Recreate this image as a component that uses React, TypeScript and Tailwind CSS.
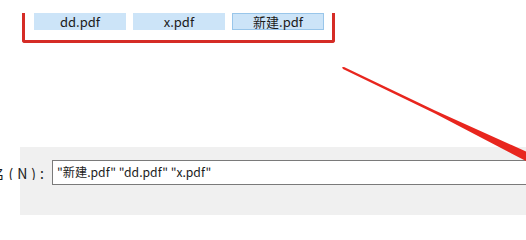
import React from "react";

const font = { fontFamily: '"Noto Sans CJK SC", "Noto Sans", sans-serif' };

export default function App() {
  return (
    <div
      className="relative w-[526px] h-[215px] overflow-hidden bg-white text-[#1b1b1b]"
      style={font}
    >
      <div className="pt-[13px] pl-[22px]">
        <div className="w-[313px] h-[30px] border-x-[3px] border-b-[3px] border-[#d52c26] rounded-b-[3px] pl-[9px]">
          <div className="flex gap-[7px]">
            <div className="w-[92px] h-[17px] bg-[#cce4f8] flex items-center justify-center text-[13px] leading-none">
              dd.pdf
            </div>
            <div className="w-[92px] h-[17px] bg-[#cce4f8] flex items-center justify-center text-[13px] leading-none">
              x.pdf
            </div>
            <div className="w-[92px] h-[17px] bg-[#cce4f8] border border-[#99c6ea] flex items-center justify-center text-[13px] leading-none">
              新建.pdf
            </div>
          </div>
        </div>
      </div>

      <div className="mt-[104px] ml-[20px] h-[68px] bg-[#f0f0f0] pt-[13px]">
        <div className="-ml-[20px] flex items-center">
          <div className="w-[48px] overflow-hidden flex justify-end shrink-0">
            <span className="whitespace-nowrap text-[14px] leading-none tracking-[4px]">文件名(N):</span>
          </div>
          <div className="ml-[4px] w-[520px] shrink-0 h-[25px] bg-white border border-[#7a7a7a] flex items-center pl-[4px] text-[12.2px] whitespace-nowrap">
            "新建.pdf" "dd.pdf" "x.pdf"
          </div>
        </div>
      </div>

      <svg
        className="absolute left-0 top-0 pointer-events-none"
        width="526"
        height="215"
        viewBox="0 0 526 215"
      >
        <polygon
          points="342,67.3 344,67 435,110.5 526,151.5 526,161 435,113.5 343,69"
          fill="#e8261e"
        />
      </svg>
    </div>
  );
}
